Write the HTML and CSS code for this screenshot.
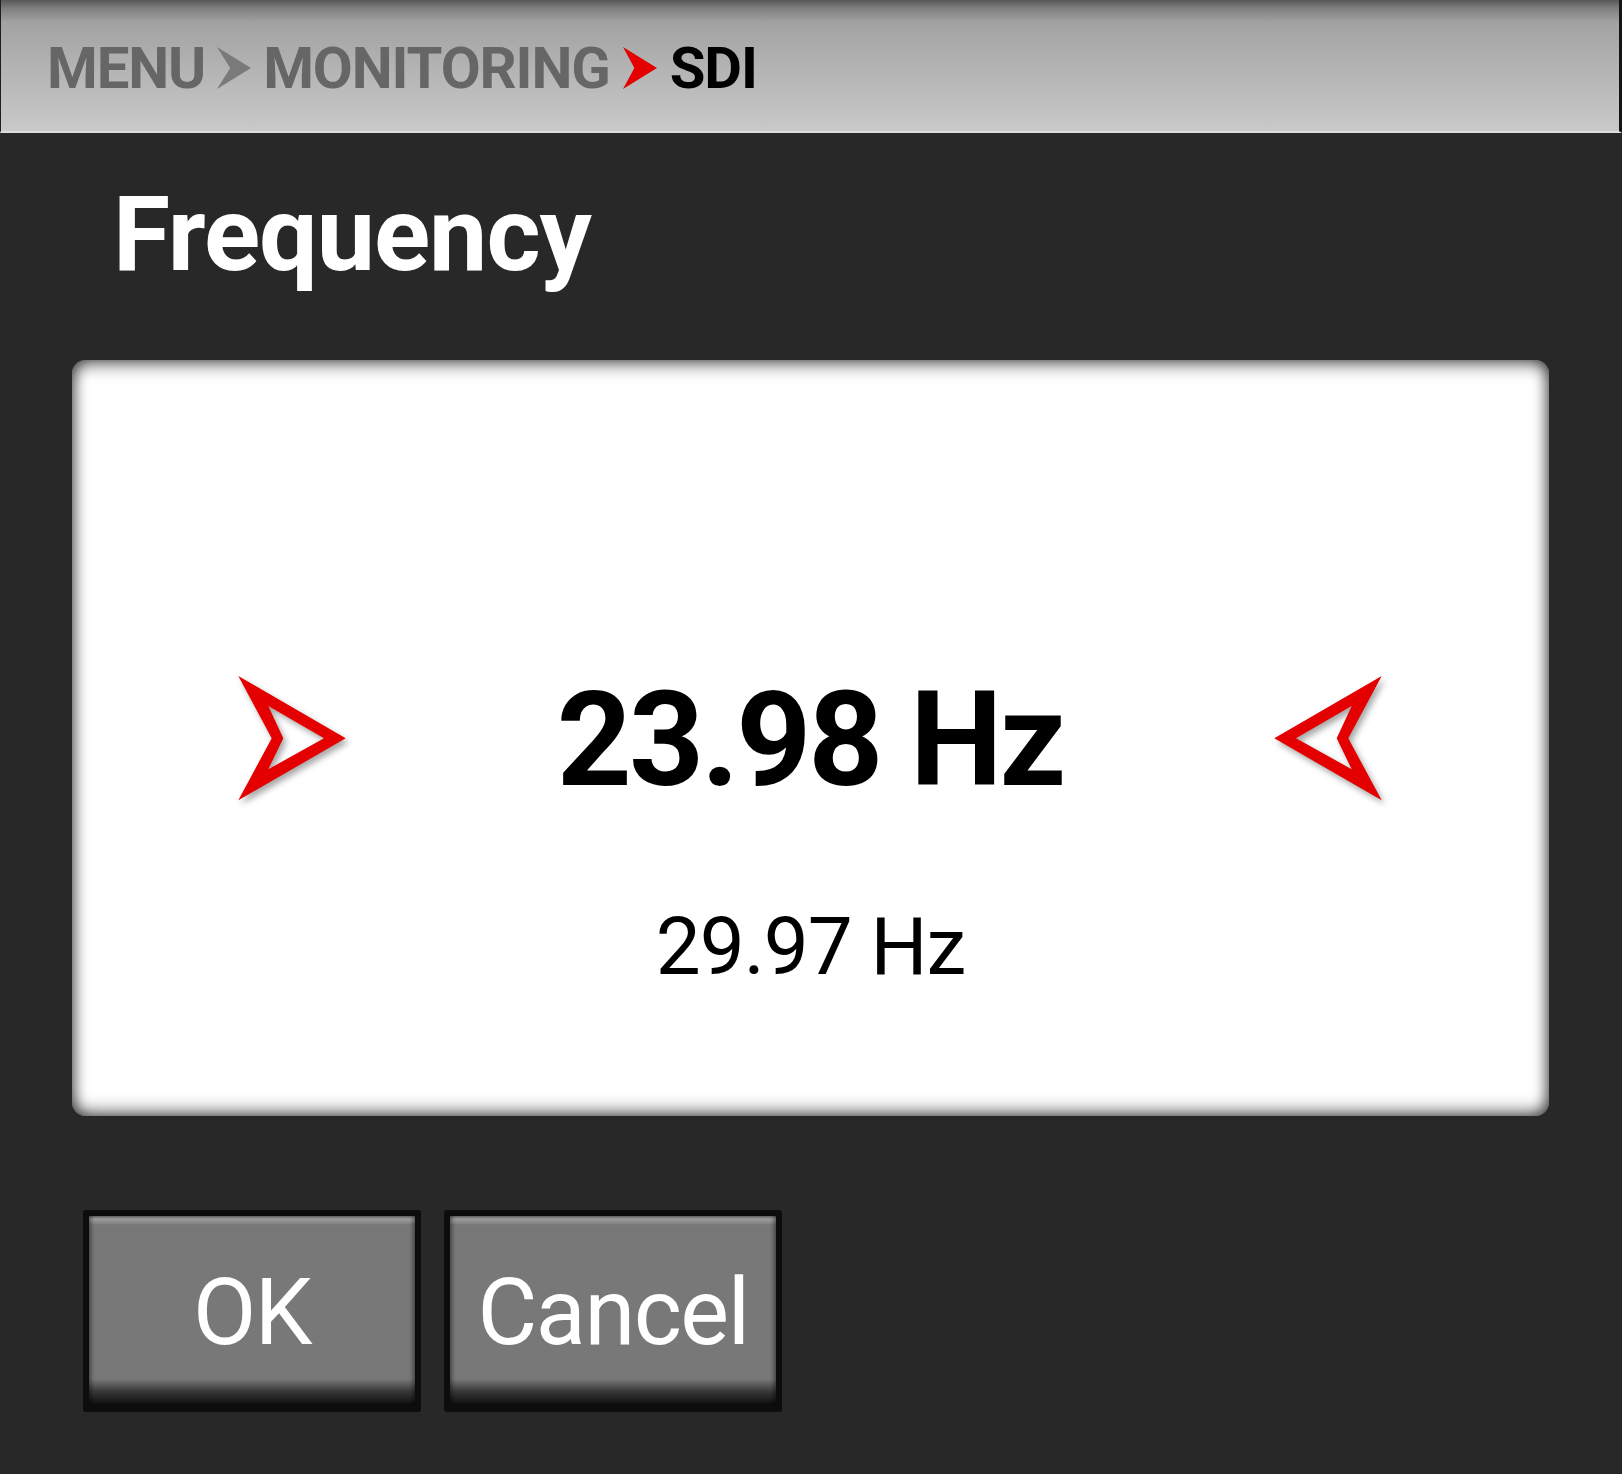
FILE: index.html
```html
<!DOCTYPE html>
<html lang="en">
<head>
<meta charset="utf-8">
<title>Frequency</title>
<link rel="stylesheet" href="styles.css">
</head>
<body>
<div class="screen">
  <header class="crumbs">
    <span class="crumb">MENU</span>
    <svg class="sep" viewBox="0 0 36 42" width="34" height="42" preserveAspectRatio="none"><polygon points="0,0 36,21 0,42 14,21" fill="#7a7a7a"/></svg>
    <span class="crumb">MONITORING</span>
    <svg class="sep sep-active" viewBox="0 0 36 42" width="34" height="42" preserveAspectRatio="none"><polygon points="0,0 36,21 0,42 12,21" fill="#e40000"/></svg>
    <span class="crumb current">SDI</span>
  </header>

  <h1 class="title">Frequency</h1>

  <section class="panel">
    <div class="value-row">
      <svg class="arrow" viewBox="0 0 108 125" width="108" height="125">
        <path fill="#e40000" fill-rule="evenodd" d="M0.3 0 L107.7 62.3 L0.3 124.3 L33.7 62.3 Z M30.3 30 L45.3 62.3 L30.3 93.3 L86 62.3 Z"/>
      </svg>
      <div class="value">23.98 Hz</div>
      <svg class="arrow" viewBox="0 0 108 125" width="108" height="125">
        <path fill="#e40000" fill-rule="evenodd" d="M107.7 0 L0.3 62.3 L107.7 124.3 L74.3 62.3 Z M77.7 30 L62.7 62.3 L77.7 93.3 L22 62.3 Z"/>
      </svg>
    </div>
    <div class="next">29.97 Hz</div>
  </section>

  <div class="actions">
    <button class="btn" type="button"><span class="btn-face">OK</span></button>
    <button class="btn" type="button"><span class="btn-face">Cancel</span></button>
  </div>
</div>
</body>
</html>
```

FILE: styles.css
```css
html, body {
  margin: 0;
  padding: 0;
}

body {
  background: #282828;
  font-family: Roboto, "Noto Sans", "Liberation Sans", sans-serif;
}

.screen {
  width: 1622px;
  height: 1474px;
  overflow: hidden;
  background: #282828;
}

.crumbs {
  box-sizing: border-box;
  height: 133px;
  display: flex;
  align-items: flex-start;
  gap: 0;
  padding: 39px 0 0 46px;
  background: linear-gradient(to bottom, #575757 0, #7d7d7d 8px, #a2a2a2 22px, #b4b4b4 70px, #c9c9c9 130px);
  border-left: 1px solid #1e1e1e;
  border-right: 3px solid #141414;
  border-bottom: 2px solid #dcdcdc;
}

.crumb {
  font-size: 58px;
  font-weight: 700;
  line-height: 1;
  letter-spacing: -1.1px;
  color: #666666;
}

.crumb.current {
  color: #000000;
}

.sep {
  display: block;
  margin: 8px 12px 0 12px;
}

.sep-active {
  margin: 8px 13px 0 13px;
}

.title {
  margin: 50px 0 0 0;
  padding-left: 113px;
  font-size: 104px;
  font-weight: 700;
  line-height: 1;
  letter-spacing: -1px;
  color: #ffffff;
}

.panel {
  box-sizing: border-box;
  margin: 73px 0 0 72px;
  width: 1477px;
  height: 756px;
  padding-top: 313px;
  background: #ffffff;
  border-radius: 14px;
  box-shadow: inset 0 10px 16px -4px rgba(0, 0, 0, 0.45),
              inset 0 -10px 16px -4px rgba(0, 0, 0, 0.45),
              inset 8px 0 14px -4px rgba(0, 0, 0, 0.4),
              inset -8px 0 14px -4px rgba(0, 0, 0, 0.4);
  display: flex;
  flex-direction: column;
  align-items: stretch;
}

.value-row {
  display: flex;
  align-items: center;
  justify-content: space-between;
  padding: 0 167px 0 166px;
  height: 131px;
}

.arrow {
  display: block;
  filter: drop-shadow(3px 4px 3px rgba(0, 0, 0, 0.35));
}

.value {
  font-size: 131px;
  font-weight: 700;
  line-height: 1;
  letter-spacing: -3px;
  color: #000000;
  margin-top: 3px;
}

.next {
  margin-top: 103px;
  text-align: center;
  font-size: 80px;
  font-weight: 400;
  line-height: 1;
  letter-spacing: -1px;
  color: #000000;
}

.actions {
  display: flex;
  gap: 23px;
  margin: 94px 0 0 83px;
}

.btn {
  box-sizing: border-box;
  width: 338px;
  height: 202px;
  padding: 6px 6px 7px 6px;
  margin: 0;
  border: none;
  border-radius: 3px;
  background: #0d0d0d;
  display: flex;
  cursor: pointer;
}

.btn-face {
  flex: 1;
  display: flex;
  align-items: center;
  justify-content: center;
  padding-top: 4px;
  font-family: Roboto, "Noto Sans", "Liberation Sans", sans-serif;
  font-size: 92px;
  font-weight: 400;
  line-height: 1;
  letter-spacing: -1.5px;
  color: #ffffff;
  background: linear-gradient(to bottom, #6e6e6e 0, #9c9c9c 3px, #8e8e8e 6px, #787878 9px, #787878 calc(100% - 26px), #3a3a3a calc(100% - 14px), #0d0d0d 100%);
  box-shadow: inset 4px 0 4px -2px rgba(0, 0, 0, 0.45), inset -4px 0 4px -2px rgba(0, 0, 0, 0.45);
}
```
